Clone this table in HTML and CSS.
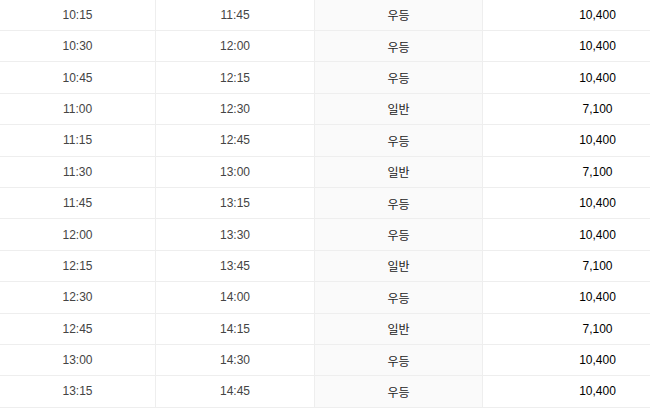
FILE: index.html
```html
<!DOCTYPE html>
<html lang="ko">
<head>
<meta charset="utf-8">
<title>시간표</title>
<link rel="stylesheet" href="styles.css">
</head>
<body>
<div class="timetable">
  <div class="row"><div class="cell dep">10:15</div><div class="cell arr">11:45</div><div class="cell grade">우등</div><div class="cell fare">10,400</div></div>
  <div class="row"><div class="cell dep">10:30</div><div class="cell arr">12:00</div><div class="cell grade">우등</div><div class="cell fare">10,400</div></div>
  <div class="row"><div class="cell dep">10:45</div><div class="cell arr">12:15</div><div class="cell grade">우등</div><div class="cell fare">10,400</div></div>
  <div class="row"><div class="cell dep">11:00</div><div class="cell arr">12:30</div><div class="cell grade">일반</div><div class="cell fare">7,100</div></div>
  <div class="row"><div class="cell dep">11:15</div><div class="cell arr">12:45</div><div class="cell grade">우등</div><div class="cell fare">10,400</div></div>
  <div class="row"><div class="cell dep">11:30</div><div class="cell arr">13:00</div><div class="cell grade">일반</div><div class="cell fare">7,100</div></div>
  <div class="row"><div class="cell dep">11:45</div><div class="cell arr">13:15</div><div class="cell grade">우등</div><div class="cell fare">10,400</div></div>
  <div class="row"><div class="cell dep">12:00</div><div class="cell arr">13:30</div><div class="cell grade">우등</div><div class="cell fare">10,400</div></div>
  <div class="row"><div class="cell dep">12:15</div><div class="cell arr">13:45</div><div class="cell grade">일반</div><div class="cell fare">7,100</div></div>
  <div class="row"><div class="cell dep">12:30</div><div class="cell arr">14:00</div><div class="cell grade">우등</div><div class="cell fare">10,400</div></div>
  <div class="row"><div class="cell dep">12:45</div><div class="cell arr">14:15</div><div class="cell grade">일반</div><div class="cell fare">7,100</div></div>
  <div class="row"><div class="cell dep">13:00</div><div class="cell arr">14:30</div><div class="cell grade">우등</div><div class="cell fare">10,400</div></div>
  <div class="row"><div class="cell dep">13:15</div><div class="cell arr">14:45</div><div class="cell grade">우등</div><div class="cell fare">10,400</div></div>
</div>
</body>
</html>
```

FILE: styles.css
```css
html, body {
  margin: 0;
  padding: 0;
  overflow: hidden;
  background: #ffffff;
}

.timetable {
  width: 650px;
  margin-top: -0.4px;
  font-family: "Liberation Sans", "Noto Sans CJK KR", sans-serif;
  font-size: 12px;
  color: #333333;
}

.row {
  display: grid;
  grid-template-columns: 156px 159px 168px 1fr;
  height: 31.4px;
  box-sizing: border-box;
  border-bottom: 1px solid #eeeeee;
}

.cell {
  display: flex;
  align-items: center;
  justify-content: center;
  box-sizing: border-box;
  border-right: 1px solid #eeeeee;
}

.dep,
.arr {
  color: #444444;
}

.grade {
  background: #fafafa;
  color: #222222;
}

.fare {
  color: #000000;
  border-right: none;
  padding-left: 62px;
}
```
